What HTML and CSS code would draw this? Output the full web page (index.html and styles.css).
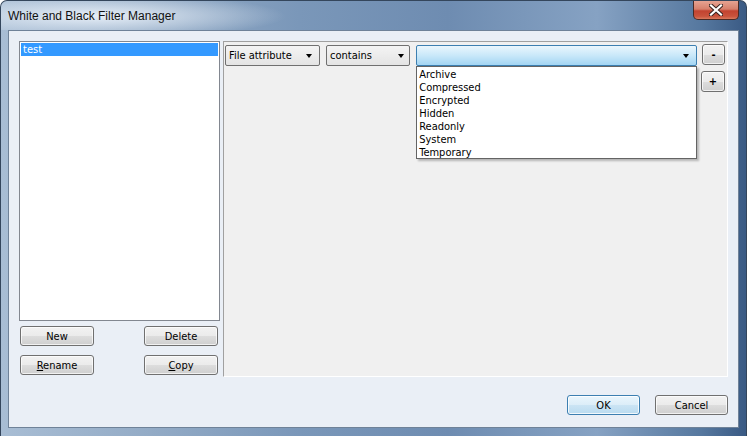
FILE: index.html
```html
<!DOCTYPE html>
<html lang="en">
<head>
    <meta charset="UTF-8"/>
    <title>White and Black Filter Manager</title>
    <link rel="stylesheet" href="styles.css">
</head>
<body>
<div class="window">
    <div class="titlebar">
        <span class="title">White and Black Filter Manager</span>
        <button class="close" type="button">
            <svg width="14" height="12" viewBox="0 0 14 12">
                <path d="M2 1.5 L12 10.5 M12 1.5 L2 10.5" stroke="#3a2420" stroke-width="4.2" stroke-linecap="square"/>
                <path d="M2 1.5 L12 10.5 M12 1.5 L2 10.5" stroke="#ffffff" stroke-width="2.2" stroke-linecap="square"/>
            </svg>
        </button>
    </div>

    <div class="client">
        <div class="main">
            <div class="sidebar">
                <ul class="filter-list">
                    <li class="selected">test</li>
                </ul>
                <div class="list-buttons">
                    <button class="btn" type="button">New</button>
                    <button class="btn" type="button">Delete</button>
                    <button class="btn" type="button"><span class="key">R</span>ename</button>
                    <button class="btn" type="button"><span class="key">C</span>opy</button>
                </div>
            </div>

            <div class="panel">
                <div class="rule-row">
                    <div class="combo combo-field">File attribute<span class="arrow"></span></div>
                    <div class="combo combo-op">contains<span class="arrow"></span></div>
                    <div class="combo-wrap">
                        <div class="combo combo-value open"><span class="arrow"></span></div>
                        <ul class="dropdown">
                            <li>Archive</li>
                            <li>Compressed</li>
                            <li>Encrypted</li>
                            <li>Hidden</li>
                            <li>Readonly</li>
                            <li>System</li>
                            <li>Temporary</li>
                        </ul>
                    </div>
                    <button class="btn small remove" type="button">-</button>
                </div>
                <div class="add-row">
                    <button class="btn small add" type="button">+</button>
                </div>
            </div>
        </div>

        <div class="footer">
            <button class="btn default" type="button">OK</button>
            <button class="btn" type="button">Cancel</button>
        </div>
    </div>
</div>
</body>
</html>
```

FILE: styles.css
```css
body {
    margin: 0;
    background-color: #ffffff;
    font-family: "DejaVu Sans Condensed", "Liberation Sans", sans-serif;
    font-size: 11px;
    color: #000;
}

.window {
    width: 747px;
    height: 436px;
    box-sizing: border-box;
    border: 1px solid #34465c;
    border-bottom: none;
    border-radius: 7px 7px 0 0;
    background: linear-gradient(90deg, #a8bdd4 0%, #93abc6 20%, #7a97b9 40%, #6e8cb1 60%, #86a2c3 80%, #56789f 94%, #3a5a84 100%);
    display: flex;
    flex-direction: column;
    overflow: hidden;
}

.titlebar {
    height: 29px;
    display: flex;
    align-items: flex-start;
    background: radial-gradient(ellipse 190px 22px at 95px 15px, rgba(235, 242, 250, 0.95), rgba(235, 242, 250, 0) 100%);
}

.title {
    padding-left: 7px;
    line-height: 30px;
    font-family: "Liberation Sans", sans-serif;
    font-size: 12px;
    color: #111;
}

.close {
    margin-left: auto;
    margin-right: 7px;
    width: 46px;
    height: 19px;
    padding: 0;
    border: 1px solid #4a2a24;
    border-top: none;
    border-radius: 0 0 5px 5px;
    background: linear-gradient(#e6a392 0%, #d6806c 45%, #c24330 55%, #c9533c 85%, #d97a5e 100%);
    display: flex;
    align-items: center;
    justify-content: center;
}

.client {
    height: 398px;
    margin: 0 7px;
    box-sizing: border-box;
    border: 1px solid #6f8298;
    background-color: #eaeff6;
    padding: 10px;
}

.main {
    display: flex;
    gap: 3px;
    height: 336px;
}

.sidebar {
    width: 201px;
}

.filter-list {
    list-style: none;
    margin: 0;
    padding: 1px;
    height: 280px;
    box-sizing: border-box;
    border: 1px solid #828790;
    background-color: #fff;
}

.filter-list li {
    height: 13px;
    line-height: 13px;
    padding-left: 2px;
}

.filter-list li.selected {
    background-color: #3399ff;
    color: #fff;
}

.list-buttons {
    display: grid;
    grid-template-columns: 74px 74px;
    justify-content: space-between;
    row-gap: 9px;
    padding: 5px 2px 0 1px;
}

.btn {
    height: 20px;
    padding: 0;
    font-family: inherit;
    font-size: 11px;
    color: #000;
    border: 1px solid #707070;
    border-radius: 3px;
    background: linear-gradient(#f2f2f2 0%, #ebebeb 50%, #dddddd 51%, #cfcfcf 100%);
    box-shadow: inset 0 0 0 1px rgba(255, 255, 255, 0.7);
}

.key {
    text-decoration: underline;
}

.panel {
    width: 505px;
    box-sizing: border-box;
    border: 1px solid #a0a0a0;
    border-right-color: #ffffff;
    border-bottom-color: #ffffff;
    background-color: #f0f0f0;
    padding: 3px 2px 0 1px;
}

.rule-row {
    display: flex;
    align-items: flex-start;
}

.combo {
    position: relative;
    height: 21px;
    box-sizing: border-box;
    line-height: 19px;
    padding-left: 3px;
    border: 1px solid #707070;
    border-radius: 2px;
    background: linear-gradient(#f4f4f4, #e4e4e4);
}

.combo-field {
    width: 96px;
}

.combo-op {
    width: 85px;
    margin-left: 6px;
}

.combo-wrap {
    position: relative;
    margin-left: 6px;
}

.combo-value {
    width: 281px;
}

.combo.open {
    border-color: #3c7fb1;
    background: linear-gradient(#eaf6fd 0%, #c9e8f9 50%, #a3d5f3 100%);
}

.arrow {
    position: absolute;
    right: 7px;
    top: 8px;
    width: 0;
    height: 0;
    border-left: 3.5px solid transparent;
    border-right: 3.5px solid transparent;
    border-top: 4px solid #000;
}

.combo-op .arrow {
    right: 5px;
}

.dropdown {
    position: absolute;
    left: 0;
    top: 21px;
    width: 281px;
    height: 93px;
    box-sizing: border-box;
    margin: 0;
    padding: 1px 0 0 2px;
    list-style: none;
    background-color: #fff;
    border: 1px solid #646464;
    box-shadow: 2px 2px 2px rgba(0, 0, 0, 0.25);
}

.dropdown li {
    height: 13px;
    line-height: 13px;
}

.small {
    width: 23px;
    height: 21px;
    font-weight: bold;
}

.remove {
    margin-left: 5px;
    margin-top: -1px;
}

.add-row {
    display: flex;
    justify-content: flex-end;
    padding-top: 5px;
}

.add {
    width: 24px;
    margin-right: 0;
}

.footer {
    display: flex;
    justify-content: flex-end;
    gap: 15px;
    margin-top: 18px;
}

.footer .btn {
    width: 73px;
}

.btn.default {
    border-color: #3c7fb1;
    background: linear-gradient(#eaf6fd 0%, #dcedf8 50%, #cbe4f4 51%, #b9dbf0 100%);
    box-shadow: inset 0 0 0 1px rgba(255, 255, 255, 0.8);
}
```
